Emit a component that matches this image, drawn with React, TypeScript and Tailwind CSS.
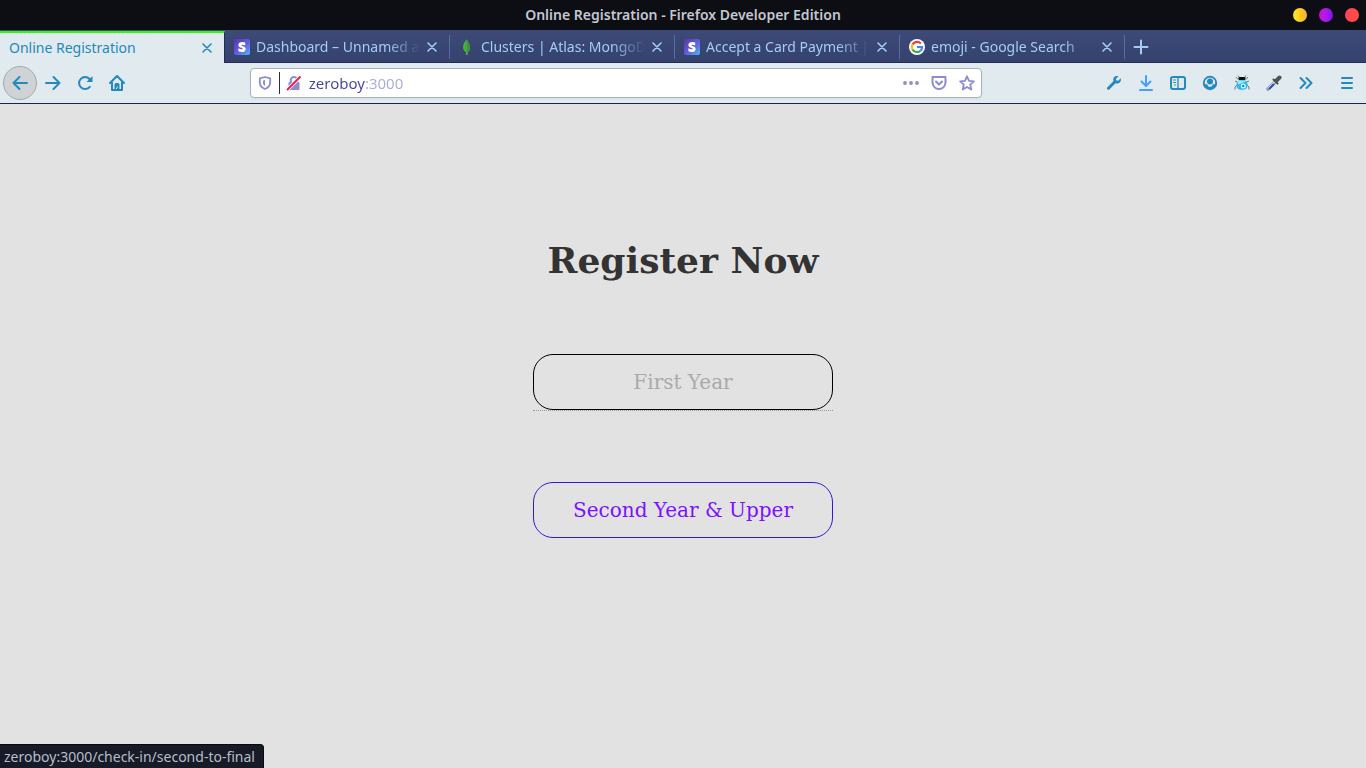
import type { ReactNode } from "react";

function CloseIcon() {
  return (
    <svg viewBox="0 0 10 10" className="size-2.5" fill="none" stroke="currentColor" strokeWidth="1.6" strokeLinecap="round">
      <path d="M1 1l8 8M9 1l-8 8" />
    </svg>
  );
}

function StripeIcon() {
  return (
    <svg viewBox="0 0 16 16" className="size-4 shrink-0">
      <defs>
        <linearGradient id="stripe" x1="0" y1="0" x2="1" y2="1">
          <stop offset="0" stopColor="#5a35a8" />
          <stop offset=".55" stopColor="#6360dd" />
          <stop offset="1" stopColor="#45bdf5" />
        </linearGradient>
      </defs>
      <rect width="16" height="16" rx="2" fill="url(#stripe)" />
      <path
        d="M11.200 3.600C10.300 3.200 9.300 3 8.300 3 5.900 3 4.400 4.200 4.400 6c0 2.900 4.200 2.500 4.200 3.700 0 .4-.4.6-1 .6-.9 0-2.100-.4-3.200-1v3c1.100.5 2.200.7 3.300.7 2.500 0 4-1.100 4-3.100 0-3-4.300-2.600-4.300-3.700 0-.3.400-.5.900-.5.900 0 1.900.3 2.900.8z"
        fill="#fff"
      />
    </svg>
  );
}

function LeafIcon() {
  return (
    <svg viewBox="0 0 16 16" className="size-4 shrink-0">
      <path d="M7.700.2C6 2.600 4 4.600 4 8.100c0 3.200 2 4.700 3.400 5.600l.2 2.200h.6l.2-2.200C10 12.600 11 10.800 11 8 11 4.600 8.600 2.500 7.700.2z" fill="#4faa41" />
      <path d="M7.700.2v13.600l.7-.1C10 12.600 11 10.800 11 8 11 4.600 8.600 2.500 7.700.2z" fill="#3f9536" />
      <path d="M7.400 13.700h1l-.2 2.300h-.6z" fill="#b8b89a" />
    </svg>
  );
}

function GoogleIcon() {
  return (
    <svg viewBox="0 0 16 16" className="size-4 shrink-0">
      <circle cx="8" cy="8" r="8" fill="#fff" />
      <g fill="none" strokeWidth="2.200">
        <path d="M11.900 4.600A5.100 5.100 0 0 0 3.500 5.600" stroke="#ea4335" />
        <path d="M3.500 5.600a5.100 5.100 0 0 0 0 4.800" stroke="#fbbc05" />
        <path d="M3.500 10.400a5.100 5.100 0 0 0 7.900 1.400" stroke="#34a853" />
        <path d="M11.400 11.800A5.100 5.100 0 0 0 13.100 8H8" stroke="#4285f4" />
      </g>
    </svg>
  );
}

function Icon({ children, width = 2 }: { children: ReactNode; width?: number }) {
  return (
    <svg
      viewBox="0 0 16 16"
      className="size-4"
      fill="none"
      stroke="currentColor"
      strokeWidth={width}
      strokeLinecap="round"
      strokeLinejoin="round"
    >
      {children}
    </svg>
  );
}

function ToolButton({ label, children, className = "" }: { label: string; children: ReactNode; className?: string }) {
  return (
    <button aria-label={label} className={`flex size-8 shrink-0 items-center justify-center ${className}`}>
      {children}
    </button>
  );
}

function Tab({ icon, title }: { icon: ReactNode; title: string }) {
  return (
    <div className="flex h-full w-[225px] min-w-0 items-center pl-[9px] text-[#a2cdf5]">
      {icon}
      <button className="ml-1.5 flex-1 overflow-hidden text-left whitespace-nowrap [mask-image:linear-gradient(to_right,black_80%,transparent)]">
        {title}
      </button>
      <button aria-label={`Close ${title}`} className="flex w-6 items-center justify-center">
        <CloseIcon />
      </button>
      <span className="ml-[5px] h-6 w-px bg-[#566e9e]" />
    </div>
  );
}

function TitleBar() {
  return (
    <header className="relative flex h-[30px] items-center justify-center bg-[#0c0e13] text-sm font-semibold text-[#c3c7d1]">
      <span>Online Registration - Firefox Developer Edition</span>
      <div className="absolute right-[7px] flex gap-3">
        <button aria-label="Minimize" className="size-3.5 rounded-full bg-linear-to-r from-[#f9ee08] to-[#ffac30]" />
        <button aria-label="Maximize" className="size-3.5 rounded-full bg-linear-to-r from-[#d500cf] to-[#8000ff]" />
        <button aria-label="Close window" className="size-3.5 rounded-full bg-linear-to-r from-[#ff4060] to-[#ff5030]" />
      </div>
    </header>
  );
}

function TabStrip() {
  return (
    <div className="flex h-[33px] border-t border-b border-t-[#3d4a78] border-b-[#232c57] bg-linear-to-b from-[#3d4a78] to-[#35426e] text-sm">
      <div className="-mb-px flex w-[225px] min-w-0 items-center border-t-2 border-r border-t-[#30fa12] border-r-[#232c57] bg-[#e1eaef] pr-[5px] pb-px pl-[9px] text-[#2489bd]">
        <button className="flex-1 overflow-hidden text-left whitespace-nowrap">Online Registration</button>
        <button aria-label="Close Online Registration" className="flex w-6 items-center justify-center">
          <CloseIcon />
        </button>
      </div>
      <Tab icon={<StripeIcon />} title="Dashboard – Unnamed account" />
      <Tab icon={<LeafIcon />} title="Clusters | Atlas: MongoDB Atlas" />
      <Tab icon={<StripeIcon />} title="Accept a Card Payment | Stripe" />
      <Tab icon={<GoogleIcon />} title="emoji - Google Search" />
      <button aria-label="New tab" className="flex w-8 items-center justify-center text-[#a2cdf5]">
        <Icon><path d="M8 1.500v13M1.500 8h13" /></Icon>
      </button>
    </div>
  );
}

function AddressBar() {
  return (
    <div className="flex h-[30px] min-w-0 flex-[732] items-center rounded-sm border border-[#a9b2b8] bg-white text-[#8d8cce] shadow-xs">
      <button aria-label="Tracking protection" className="flex w-7 justify-center">
        <svg viewBox="0 0 16 16" className="size-4">
          <path d="M8 2 13.200 3.300v4C13.200 10.500 11 12.900 8 14 5 12.900 2.800 10.500 2.800 7.300v-4z" fill="none" stroke="currentColor" strokeWidth="1.800" strokeLinejoin="round" />
          <path d="M8 5v6C6.500 10 6 9 6 7.500v-2z" fill="currentColor" />
        </svg>
      </button>
      <span className="h-[22px] w-px bg-[#303030]" />
      <button aria-label="Connection is not secure" className="flex w-7 justify-center">
        <svg viewBox="0 0 16 16" className="size-4">
          <path d="M4.800 8V5.200a3.200 3.200 0 0 1 6.400 0V8" fill="none" stroke="currentColor" strokeWidth="2" />
          <rect x="2.500" y="7" width="11" height="8" rx="1" fill="currentColor" />
          <path d="M1.500 14.500 14 2" stroke="#fff" strokeWidth="3.500" />
          <path d="M1.500 14.500 14 2" stroke="#ff1149" strokeWidth="1.800" strokeLinecap="round" />
        </svg>
      </button>
      <input
        aria-label="Address"
        defaultValue="zeroboy:3000"
        className="ml-px min-w-0 flex-1 bg-linear-to-r from-[#4544a0] from-[56px] to-[#a9a9da] to-[56px] bg-clip-text text-[15px] text-transparent outline-none"
      />
      <div className="flex gap-3 pr-1.5">
        <button aria-label="Page actions">
          <svg viewBox="0 0 16 16" className="size-4" fill="currentColor">
            <circle cx="2" cy="8" r="1.900" /><circle cx="8" cy="8" r="1.900" /><circle cx="14" cy="8" r="1.900" />
          </svg>
        </button>
        <button aria-label="Save to Pocket">
          <Icon><path d="M1.500 2h13v5.500a6.500 6.500 0 0 1-13 0zM5 6.500l3 3 3-3" /></Icon>
        </button>
        <button aria-label="Bookmark this page">
          <Icon width={1.8}><path d="M8 1.300l2 4.500 4.900.5-3.700 3.300 1.100 4.900L8 12l-4.300 2.500 1.100-4.900L1.100 6.300 6 5.800z" /></Icon>
        </button>
      </div>
    </div>
  );
}

function NavBar() {
  return (
    <nav className="flex h-[41px] items-center border-b border-[#1b2450] bg-[#e1eaef] px-[3px] text-[#2489bd]">
      <button aria-label="Back" className="flex size-[34px] items-center justify-center rounded-full border border-[#a5a9ab] bg-[#cfd3d5]">
        <Icon><path d="M15 8H1.500M7.500 2l-6 6 6 6" /></Icon>
      </button>
      <ToolButton label="Forward"><Icon><path d="M1 8h13.500M8.500 2l6 6-6 6" /></Icon></ToolButton>
      <ToolButton label="Reload">
        <svg viewBox="0 0 16 16" className="size-4" fill="none" stroke="currentColor" strokeWidth="2" strokeLinecap="round">
          <path d="M12.800 11.800A6 6 0 1 1 12.500 4l1.300 1.800" />
          <path d="M15.500 1v6h-6z" fill="currentColor" stroke="none" />
        </svg>
      </ToolButton>
      <ToolButton label="Home">
        <svg viewBox="0 0 16 16" className="size-4" fill="none" stroke="currentColor" strokeWidth="2" strokeLinecap="round" strokeLinejoin="round">
          <path d="M1 8l7-7 7 7M3 7.500V15h10V7.500" />
          <path d="M6 14.500V9.500A1 1 0 0 1 7 8.500h2a1 1 0 0 1 1 1v5H8.500V11.500" strokeWidth="1" fill="currentColor" />
          <path d="M8 11.500h1v1H8z" fill="#e1eaef" stroke="none" />
        </svg>
      </ToolButton>
      <div className="flex-[117]" />
      <AddressBar />
      <div className="flex-[116]" />
      <ToolButton label="Developer tools">
        <svg viewBox="0 0 16 16" className="size-4" fill="currentColor">
          <path d="M14.700 3.300 12.200 5.800 10.300 5.500 10 3.700 12.500 1.200C10.600.5 8.600 1 7.700 2.700c-.6 1.100-.5 2.300-.1 3.300L1.200 12.400c-1 1.200.9 3.100 2.100 2.100L9.500 8.200c1.300.6 3.200.3 4.300-.8 1.100-1.100 1.400-2.700.9-4.100z" />
        </svg>
      </ToolButton>
      <ToolButton label="Downloads" className="text-[#459fff]">
        <Icon><path d="M8 1v9.500M3.500 6.500 8 11l4.500-4.500M2 15h12" /></Icon>
      </ToolButton>
      <ToolButton label="Sidebars">
        <Icon><rect x="1" y="2" width="14" height="12" rx="2" /><path d="M8 2v12" strokeWidth="1.300" /><path d="M3.500 5h2M3.500 7.500h2M4.500 10h1" strokeWidth="1" /></Icon>
      </ToolButton>
      <ToolButton label="Account">
        <svg viewBox="0 0 16 16" className="size-4">
          <circle cx="8" cy="8" r="7.200" fill="currentColor" />
          <path d="M4.200 4.200C2.600 6 2.500 8 3.200 9.300h2C6 12.700 10 12.700 10.800 9.300h2c.7-1.300.6-3.300-1-5.100C9.700 2.300 6.300 2.300 4.200 4.200z" fill="#e1eaef" />
          <circle cx="8" cy="6.600" r="3" fill="currentColor" />
        </svg>
      </ToolButton>
      <ToolButton label="Bug reporter">
        <svg viewBox="0 0 16 16" className="size-4">
          <path d="M4 4.500 2 2M12 4.500 14 2M3.500 7 1 6M12.500 7 15 6M3 10 1 12v2.500M13 10l2 2v2.500M5 2 4 .5M11 2l1-1.500" stroke="#66777d" fill="none" />
          <rect x="4.500" y="2" width="7" height="3" rx="1" fill="#071014" />
          <path d="M3.500 6.500C4.500 4.500 11.500 4.500 12.500 6.500c1.500 2 1.500 5 0 7-1.800 1.800-7.200 1.800-9 0-1.500-2-1.500-5 0-7z" fill="#28bdee" />
          <path d="M3.500 6.500c2-1.300 6-1.300 8 0L4.500 9.500z" fill="#9de9ff" />
          <circle cx="9.300" cy="11" r="2.500" fill="#e8fbff" />
          <circle cx="9.300" cy="11" r="1.200" fill="#1689c9" />
        </svg>
      </ToolButton>
      <ToolButton label="Color picker">
        <svg viewBox="0 0 16 16" className="size-4" strokeLinecap="round">
          <path d="M2 14 9 7" stroke="#929ba3" strokeWidth="3.500" />
          <path d="M2.500 13 9 6.500" stroke="#dce3ed" strokeWidth="1.500" />
          <path d="M3.500 13.500 7.500 9.500" stroke="#3346ce" strokeWidth="2" />
          <path d="M7.500 4.500 11.500 8.500" stroke="#44484b" strokeWidth="2" />
          <path d="M10.500 5.500 13.500 2.500" stroke="#505457" strokeWidth="4" />
        </svg>
      </ToolButton>
      <ToolButton label="More tools"><Icon><path d="M2.500 3l5 5-5 5M8.500 3l5 5-5 5" /></Icon></ToolButton>
      <span className="ml-1 h-[34px] w-px bg-[#e7ebe9]" />
      <ToolButton label="Open menu" className="ml-1"><Icon><path d="M3 3h10M3 8h10M3 13h10" /></Icon></ToolButton>
    </nav>
  );
}

export default function App() {
  return (
    <div className="flex min-h-screen flex-col bg-[#e2e2e2] font-['Noto_Sans',sans-serif]">
      <TitleBar />
      <TabStrip />
      <NavBar />
      <main className="flex flex-1 flex-col items-center pt-[134px] font-['DejaVu_Serif',serif]">
        <h1 className="text-4xl leading-[44px] font-bold text-[#333333]">Register Now</h1>
        <div className="mt-[72px] border-b border-dotted border-[#999999]">
          <button disabled className="block h-14 w-[300px] rounded-[20px] border border-black text-xl text-[#aaaaaa]">
            First Year
          </button>
        </div>
        <a
          href="/check-in/second-to-final"
          className="mt-[71px] flex h-14 w-[300px] items-center justify-center rounded-[20px] border border-[#3418d8] text-xl text-[#7a12ff]"
        >
          Second Year &amp; Upper
        </a>
      </main>
      <div className="fixed bottom-0 left-0 rounded-tr-sm border-t border-r border-[#080a10] bg-[#171a27] pt-px pr-2 pl-1 text-sm leading-[22px] text-[#b9bdc9]">
        zeroboy:3000/check-in/second-to-final
      </div>
    </div>
  );
}
